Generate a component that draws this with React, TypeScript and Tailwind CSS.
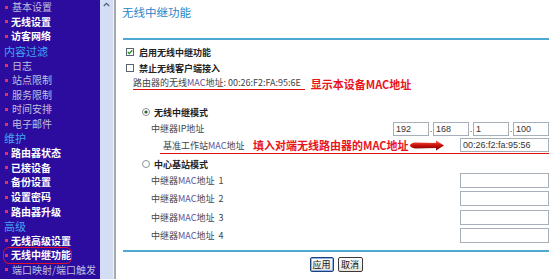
import React from "react";

type Item = { t: string; k: "gray" | "white" | "head"; circled?: boolean };

const menu: Item[] = [
  { t: "基本设置", k: "gray" },
  { t: "无线设置", k: "white" },
  { t: "访客网络", k: "white" },
  { t: "内容过滤", k: "head" },
  { t: "日志", k: "gray" },
  { t: "站点限制", k: "gray" },
  { t: "服务限制", k: "gray" },
  { t: "时间安排", k: "gray" },
  { t: "电子邮件", k: "gray" },
  { t: "维护", k: "head" },
  { t: "路由器状态", k: "white" },
  { t: "已接设备", k: "white" },
  { t: "备份设置", k: "white" },
  { t: "设置密码", k: "white" },
  { t: "路由器升级", k: "white" },
  { t: "高级", k: "head" },
  { t: "无线高级设置", k: "white" },
  { t: "无线中继功能", k: "white", circled: true },
  { t: "端口映射/端口触发", k: "gray" },
];

function Checkbox({ checked }: { checked?: boolean }) {
  return (
    <svg width="8" height="8" viewBox="0 0 8 8" className="shrink-0">
      <rect x="0.5" y="0.5" width="7" height="7" fill="#fff" stroke="#5a6470" />
      {checked && <path d="M1.8 4 L3.3 5.6 L6.3 2.2" fill="none" stroke="#1f8a1f" strokeWidth="1.3" />}
    </svg>
  );
}

function Radio({ checked }: { checked?: boolean }) {
  return (
    <svg width="8" height="8" viewBox="0 0 8 8" className="shrink-0">
      <circle cx="4" cy="4" r="3.5" fill="#fff" stroke="#8c9096" />
      {checked && <circle cx="4" cy="4" r="1.6" fill="#2e5a2e" />}
    </svg>
  );
}

function Box({ w, h, value }: { w: string; h: string; value?: string }) {
  return (
    <input
      readOnly
      value={value ?? ""}
      className={`${w} ${h} border border-[#a7afb9] bg-white px-[2px] text-[9px] leading-none text-[#333] outline-none font-['Liberation_Sans',sans-serif]`}
    />
  );
}

function Arrow() {
  return (
    <svg width="36" height="11" viewBox="0 0 36 11" className="shrink-0">
      <defs>
        <linearGradient id="ar" x1="0" y1="0" x2="0" y2="1">
          <stop offset="0" stopColor="#ff5a4a" />
          <stop offset="0.5" stopColor="#c8100a" />
          <stop offset="1" stopColor="#6e0000" />
        </linearGradient>
      </defs>
      <path d="M1 5 Q3 2.6 6 2.6 L27 3 L27 0.5 L35 5.5 L27 10.5 L27 8 L6 8.4 Q3 8.4 1 6 Z" fill="url(#ar)" />
    </svg>
  );
}

export default function App() {
  return (
    <div className="flex h-[279px] w-[553px] overflow-hidden bg-white font-['Noto_Sans_CJK_SC',sans-serif]">
      {/* Sidebar */}
      <div className="w-[100px] shrink-0 bg-[#2b0c9e]">
        {menu.map((m) => (
          <div key={m.t} className="relative flex h-[14.6px] items-center">
            {m.k === "head" ? (
              <span className="pl-[4px] text-[11px] leading-none text-[#43a4f5]">{m.t}</span>
            ) : (
              <>
                <span className="ml-[5px] h-[3px] w-[3px] shrink-0 bg-[#e0306a]" />
                <span
                  className={
                    m.k === "white"
                      ? "ml-[3px] whitespace-nowrap text-[10px] font-bold leading-none text-white"
                      : "ml-[4px] whitespace-nowrap text-[10px] leading-none text-[#c2bedc]"
                  }
                >
                  {m.t}
                </span>
              </>
            )}
            {m.circled && (
              <span className="absolute left-[3px] top-[-1px] h-[17px] w-[69px] rounded-[6px] border border-[#e0102a]" />
            )}
          </div>
        ))}
      </div>

      {/* Scrollbar */}
      <div className="flex w-[13px] shrink-0 justify-center bg-[#d3ddf4] pt-[2px]">
        <svg width="7" height="5" viewBox="0 0 7 5">
          <path d="M0.8 4 L3.5 1.3 L6.2 4" fill="none" stroke="#4d6185" strokeWidth="1.3" />
        </svg>
      </div>
      <div className="w-[1px] shrink-0 bg-[#eef2fb]" />
      <div className="w-[2px] shrink-0 bg-[#a9a9a9]" />

      {/* Content */}
      <div className="flex-1 pl-[7px] pr-[4px] text-[#333]">
        <div className="-ml-[1px] mt-[5px] h-[14px] text-[11.5px] leading-[14px] text-[#1f87c8]">无线中继功能</div>
        <div className="mt-[19px] h-[2px] bg-[#4ea8d2]" />

        <div className="mt-[4px] flex h-[16px] items-center gap-[5px] pl-[3px] text-[9px] font-bold leading-none text-[#222]">
          <Checkbox checked />
          启用无线中继功能
        </div>
        <div className="flex h-[16px] items-center gap-[5px] pl-[3px] text-[9px] font-bold leading-none text-[#222]">
          <Checkbox />
          禁止无线客户端接入
        </div>
        <div className="flex h-[16px] items-center pl-[10px] text-[9px] leading-none">
          <span className="border-b border-[#e01010] pb-[2px] pr-[4px] text-[#444]">
            路由器的无线<span className="text-[#5d4f98]">MAC</span>地址: 00:26:F2:FA:95:6E
          </span>
          <span className="ml-[6px] whitespace-nowrap text-[11px] font-bold text-[#e8141c]">显示本设备MAC地址</span>
        </div>

        <div className="mt-[12px] flex h-[16px] items-center gap-[4px] pl-[19px] text-[9px] font-bold leading-none text-[#222]">
          <Radio checked />
          无线中继模式
        </div>
        <div className="flex h-[17px] items-center pl-[28px] text-[9px] leading-none text-[#444]">
          中继器IP地址
          <div className="ml-auto flex items-center">
            <Box w="w-[36px]" h="h-[14px]" value="192" />
            <span className="w-[4px] text-center text-[8px]">.</span>
            <Box w="w-[36px]" h="h-[14px]" value="168" />
            <span className="w-[4px] text-center text-[8px]">.</span>
            <Box w="w-[36px]" h="h-[14px]" value="1" />
            <span className="w-[4px] text-center text-[8px]">.</span>
            <Box w="w-[36px]" h="h-[14px]" value="100" />
          </div>
        </div>
        <div className="ml-[37px] flex h-[17px] items-center border-b border-[#e01010] pl-[3px] text-[9px] leading-none">
          <span className="w-[90px] shrink-0 text-[#444]">
            基准工作站<span className="text-[#5d4f98]">MAC</span>地址
          </span>
          <span className="whitespace-nowrap text-[11px] font-bold text-[#e8141c]">填入对端无线路由器的MAC地址</span>
          <Arrow />
          <div className="ml-auto">
            <Box w="w-[89px]" h="h-[14px]" value="00:26:f2:fa:95:56" />
          </div>
        </div>

        <div className="mt-[3px] flex h-[14px] items-center gap-[4px] pl-[19px] text-[9px] font-bold leading-none text-[#222]">
          <Radio />
          中心基站模式
        </div>
        {[1, 2, 3, 4].map((n) => (
          <div key={n} className="flex h-[18.5px] items-center pl-[28px] text-[9px] leading-none text-[#444]">
            中继器<span className="text-[#5d4f98]">MAC</span>地址&nbsp;&nbsp;{n}
            <div className="ml-auto">
              <Box w="w-[89px]" h="h-[15px]" />
            </div>
          </div>
        ))}

        <div className="mt-[5px] h-[2px] bg-[#4ea8d2]" />
        <div className="mt-[5px] flex justify-center gap-[4px]">
          <button className="h-[15px] w-[24px] rounded-[2px] border border-[#1d3f7a] bg-gradient-to-b from-white to-[#e6e3d6] text-[9px] leading-none text-[#111] shadow-[inset_0_0_0_1px_#8fb3ea]">
            应用
          </button>
          <button className="h-[15px] w-[25px] rounded-[2px] border border-[#3b3b3b] bg-gradient-to-b from-white to-[#e6e3d6] text-[9px] leading-none text-[#111]">
            取消
          </button>
        </div>
      </div>
    </div>
  );
}
